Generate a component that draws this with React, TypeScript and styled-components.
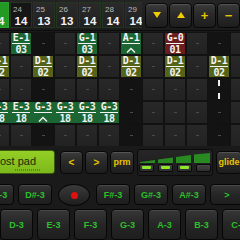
import styled, { createGlobalStyle } from "styled-components";

const GlobalStyle = createGlobalStyle`
  html, body { margin: 0; padding: 0; background: #151515; }
  body { font-family: "Liberation Sans", Arial, sans-serif; }
`;

const Screen = styled.div`
  width: 240px;
  height: 240px;
  overflow: hidden;
  background: #1a1a1a;
  display: flex;
  flex-direction: column;
`;

/* ---------- top step strip ---------- */

const TopBar = styled.div`
  height: 30px;
  display: flex;
  align-items: center;
  background: linear-gradient(#242424, #1b1b1b);
  border-bottom: 1px solid #0c0c0c;
`;

const StepWindow = styled.div`
  width: 142px;
  height: 28px;
  overflow: hidden;
  flex-shrink: 0;
`;

const StepTrack = styled.div`
  display: flex;
  gap: 1px;
  margin-left: -13px;
  height: 100%;
  align-items: center;
`;

const StepCell = styled.div<{ $active?: boolean; $dim?: boolean }>`
  width: 22px;
  height: 26px;
  flex-shrink: 0;
  box-sizing: border-box;
  border: 1px solid ${(p) => (p.$active ? "#2fa02f" : "#23351f")};
  background: ${(p) =>
    p.$active ? "#239a23" : p.$dim ? "#161616" : "linear-gradient(#2a2a2a, #202020)"};
  display: flex;
  flex-direction: column;
`;

const StepNum = styled.span`
  font-size: 8px;
  line-height: 8px;
  color: #b8b8b8;
  padding: 3px 0 0 2px;
`;

const StepVal = styled.span`
  font-size: 11.5px;
  font-weight: bold;
  line-height: 12px;
  color: #f2f2f2;
  text-align: center;
  margin-top: 1px;
`;

const ToolRow = styled.div`
  display: flex;
  gap: 1px;
  margin-left: 3px;
`;

const Btn = styled.div<{ $w: number; $h: number; $size?: number }>`
  width: ${(p) => p.$w}px;
  height: ${(p) => p.$h}px;
  flex-shrink: 0;
  box-sizing: border-box;
  border-radius: 4px;
  border: 1px solid #070707;
  background: linear-gradient(#3b3b3b, #2a2a2a 45%, #1d1d1d);
  box-shadow: inset 0 1px 0 rgba(255, 255, 255, 0.13);
  display: flex;
  align-items: center;
  justify-content: center;
  color: #e6c400;
  font-size: ${(p) => p.$size || 10}px;
  font-weight: bold;
`;

const Tri = styled.div<{ $up?: boolean }>`
  width: 0;
  height: 0;
  border-left: 4px solid transparent;
  border-right: 4px solid transparent;
  ${(p) => (p.$up ? "border-bottom" : "border-top")}: 6px solid #f0cc00;
`;

/* ---------- sequencer grid ---------- */

const Grid = styled.div`
  display: grid;
  grid-template-columns: repeat(12, 20px);
  grid-auto-rows: 21px;
  gap: 2px;
  margin: 1px 0 0 -11px;
  background: #121212;
  padding-top: 1px;
`;

const tint: Record<string, string> = {
  green: "#1c6634",
  olive: "#566419",
  red: "#6b1c1c",
};

const Cell = styled.div<{ $tone?: string; $dark?: boolean; $tied?: boolean }>`
  background: ${(p) =>
    p.$tone ? tint[p.$tone] : p.$dark ? "#131313" : "linear-gradient(#282828, #222222)"};
  box-shadow: ${(p) => (p.$tied ? `2px 0 0 ${tint.green}` : "none")};
  display: flex;
  flex-direction: column;
  align-items: center;
  justify-content: center;
  font-family: "DejaVu Sans Mono", monospace;
  font-weight: bold;
  font-size: 10px;
  letter-spacing: -0.6px;
  color: #f4f4f4;
`;

const Dash = styled.span`
  width: 3px;
  height: 1px;
  background: #4a4a4a;
`;

const NoteName = styled.span`
  line-height: 9px;
  padding: 0 1px 1px;
  border-bottom: 1px solid #f4f4f4;
`;

const NoteVal = styled.span`
  line-height: 9px;
  margin-top: 1px;
  height: 9px;
  display: flex;
  align-items: center;
`;

const TieMarks = styled.div`
  display: flex;
  flex-direction: column;
  justify-content: space-between;
  height: 19px;
  & > i {
    width: 2px;
    height: 6px;
    background: #eeeeee;
  }
`;

const Caret = () => (
  <svg width="10" height="6" viewBox="0 0 10 6">
    <path d="M1 5.5 L5 1.5 L9 5.5" fill="none" stroke="#f4f4f4" strokeWidth="1.4" />
  </svg>
);

type Slot = { n?: string; v?: string; tone?: string; tied?: boolean; marks?: boolean } | null;

const note = (n: string, v: string, tone: string, tied = false): Slot => ({ n, v, tone, tied });

const rows: Slot[][] = [
  [null, note("E-1", "03", "green"), null, null, note("G-1", "03", "green"), null, note("A-1", "^", "green"), null, note("G-0", "01", "red"), null, null, null],
  [note("D-1", "02", "olive"), null, note("D-1", "02", "olive"), null, note("D-1", "02", "olive"), null, note("D-1", "02", "olive"), null, note("D-1", "02", "olive"), null, note("D-1", "02", "olive"), null],
  [null, null, null, null, null, null, null, null, null, null, { marks: true }, null],
  [note("D-3", "18", "green", true), note("E-3", "18", "green", true), note("G-3", "^", "green", true), note("G-3", "18", "green", true), note("G-3", "18", "green", true), note("G-3", "18", "green"), null, null, null, null, null, null],
  [null, null, null, null, null, null, null, null, null, null, null, null],
];

/* ---------- control row ---------- */

const ControlRow = styled.div`
  display: flex;
  align-items: center;
  height: 28px;
  margin-top: 2px;
  gap: 2px;
`;

const Lcd = styled.div`
  width: 62px;
  height: 24px;
  margin-left: -7px;
  margin-right: 3px;
  flex-shrink: 0;
  box-sizing: border-box;
  border-radius: 3px;
  border: 1px solid #3c5a10;
  background: linear-gradient(#94cf26, #7cb81a);
  display: flex;
  flex-direction: column;
  padding: 4px 0 0 6px;
  color: #1d2a06;
  font-size: 11px;
  line-height: 12px;
`;

const LcdDots = styled.span`
  margin: 2px 0 0 15px;
  width: 26px;
  height: 2px;
  background: repeating-linear-gradient(90deg, #5a8a18 0 1px, transparent 1px 2px);
`;

const Meter = styled.div`
  width: 76px;
  height: 27px;
  flex-shrink: 0;
  box-sizing: border-box;
  margin: 0 1px;
  border-radius: 3px;
  border: 1px solid #0b0b0b;
  background: linear-gradient(#262626, #1c1c1c);
  display: flex;
  flex-direction: column;
  align-items: center;
  padding-top: 3px;
`;

const Leds = styled.div`
  display: flex;
  gap: 4px;
  margin-top: 1px;
`;

const Led = styled.div<{ $on?: boolean }>`
  width: 15px;
  height: 8px;
  box-sizing: border-box;
  border-radius: 2px;
  border: 1px solid #0a0a0a;
  background: linear-gradient(#4a4a4a, #2c2c2c);
  display: flex;
  align-items: center;
  justify-content: center;
  & > i {
    width: 9px;
    height: 3px;
    border-radius: 1px;
    background: ${(p) => (p.$on ? "#8ee82a" : "#3a3a3a")};
  }
`;

const Wedge = () => (
  <svg width="70" height="10" viewBox="0 0 70 10">
    <polygon points="0,9 15,7 15,10 0,10" fill="#2a8a22" />
    <polygon points="18,6.5 33,4.5 33,10 18,10" fill="#2a8a22" />
    <polygon points="36,4 51,2 51,10 36,10" fill="#2a8a22" />
    <polygon points="54,1.5 70,0 70,10 54,10" fill="#2a8a22" />
  </svg>
);

/* ---------- keyboard ---------- */

const KeyRow = styled.div<{ $top: number; $shift: number }>`
  display: flex;
  gap: 4px;
  margin-top: ${(p) => p.$top}px;
  margin-left: ${(p) => p.$shift}px;
`;

const Key = styled.div<{ $w: number; $h: number }>`
  width: ${(p) => p.$w}px;
  height: ${(p) => p.$h}px;
  flex-shrink: 0;
  box-sizing: border-box;
  border-radius: 4px;
  border: 1px solid #060606;
  background: linear-gradient(#363636, #262626 50%, #1e1e1e);
  box-shadow: inset 0 1px 0 rgba(255, 255, 255, 0.1);
  display: flex;
  align-items: center;
  justify-content: center;
  color: #2cc02c;
  font-size: 9px;
  font-weight: bold;
`;

const RecKey = styled.div`
  width: 30px;
  height: 20px;
  flex-shrink: 0;
  margin: 0 2px;
  border-radius: 50%;
  border: 1px solid #070707;
  background: linear-gradient(#3a3a3a, #1e1e1e);
  display: flex;
  align-items: center;
  justify-content: center;
  & > i {
    width: 7px;
    height: 7px;
    border-radius: 50%;
    background: #e01010;
  }
`;

export default function App() {
  const steps = [
    { n: "23", v: "14", active: true },
    { n: "24", v: "14", dim: true },
    { n: "25", v: "13" },
    { n: "26", v: "13" },
    { n: "27", v: "14" },
    { n: "28", v: "14" },
    { n: "29", v: "14" },
  ];
  const whites = ["D-3", "E-3", "F-3", "G-3", "A-3", "B-3", "C-4"];

  return (
    <>
      <GlobalStyle />
      <Screen>
        <TopBar>
          <StepWindow>
            <StepTrack>
              {steps.map((s) => (
                <StepCell key={s.n} $active={s.active} $dim={s.dim}>
                  <StepNum>{s.n}</StepNum>
                  <StepVal>{s.v}</StepVal>
                </StepCell>
              ))}
            </StepTrack>
          </StepWindow>
          <ToolRow>
            <Btn $w={23} $h={25}><Tri /></Btn>
            <Btn $w={23} $h={25}><Tri $up /></Btn>
            <Btn $w={23} $h={25} $size={13}>+</Btn>
            <Btn $w={23} $h={25} $size={13}>−</Btn>
          </ToolRow>
        </TopBar>

        <Grid>
          {rows.map((row, r) =>
            row.map((c, i) => {
              const dark = i % 4 === 2;
              if (!c) return <Cell key={`${r}-${i}`} $dark={dark}><Dash /></Cell>;
              if (c.marks)
                return (
                  <Cell key={`${r}-${i}`} $dark={dark}>
                    <TieMarks><i /><i /></TieMarks>
                  </Cell>
                );
              return (
                <Cell key={`${r}-${i}`} $tone={c.tone} $tied={c.tied}>
                  <NoteName>{c.n}</NoteName>
                  <NoteVal>{c.v === "^" ? <Caret /> : c.v}</NoteVal>
                </Cell>
              );
            })
          )}
        </Grid>

        <ControlRow>
          <Lcd>
            ost pad
            <LcdDots />
          </Lcd>
          <Btn $w={23} $h={23}>&lt;</Btn>
          <Btn $w={23} $h={23}>&gt;</Btn>
          <Btn $w={24} $h={23} $size={9}>prm</Btn>
          <Meter>
            <Wedge />
            <Leds>
              <Led $on><i /></Led>
              <Led $on><i /></Led>
              <Led $on><i /></Led>
              <Led><i /></Led>
            </Leds>
          </Meter>
          <Btn $w={26} $h={23} $size={9}>glide</Btn>
        </ControlRow>

        <KeyRow $top={8} $shift={-19}>
          <Key $w={33} $h={21}>C#-3</Key>
          <Key $w={34} $h={21}>D#-3</Key>
          <RecKey><i /></RecKey>
          <Key $w={34} $h={21}>F#-3</Key>
          <Key $w={34} $h={21}>G#-3</Key>
          <Key $w={34} $h={21}>A#-3</Key>
          <Key $w={34} $h={21}>&gt;</Key>
        </KeyRow>

        <KeyRow $top={3} $shift={0}>
          {whites.map((w) => (
            <Key key={w} $w={33} $h={31}>{w}</Key>
          ))}
        </KeyRow>
      </Screen>
    </>
  );
}
